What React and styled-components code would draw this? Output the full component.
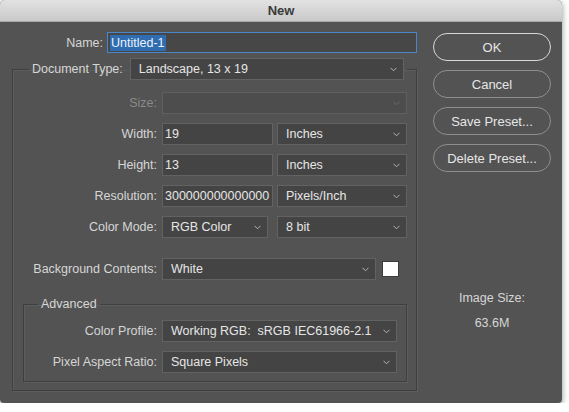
import React from 'react';
import styled, { createGlobalStyle } from 'styled-components';

const GlobalStyle = createGlobalStyle`
  html, body {
    margin: 0;
    padding: 0;
    background: #ffffff;
  }
  body {
    font-family: "Liberation Sans", Arial, Helvetica, sans-serif;
    font-size: 12.5px;
  }
`;

const Dialog = styled.div`
  width: 562px;
  background: #535353;
  border-radius: 5px 5px 4px 4px;
  box-shadow: 0 2px 6px rgba(0, 0, 0, 0.45);
  overflow: hidden;
`;

const TitleBar = styled.div`
  height: 22px;
  display: flex;
  align-items: center;
  justify-content: center;
  background: linear-gradient(#e2e2e2, #c9c9c9);
  border-bottom: 1px solid #a9a9a9;
  box-sizing: border-box;
  color: #3a3a3a;
  font-weight: 700;
  font-size: 13px;
`;

const Body = styled.div`
  display: flex;
  padding: 10px 0 12px 12px;
`;

const LeftCol = styled.div`
  width: 405px;
  display: flex;
  flex-direction: column;
`;

const RightCol = styled.div`
  width: 118px;
  margin-left: 16px;
  padding-top: 1px;
  display: flex;
  flex-direction: column;
  gap: 9px;
`;

const NameRow = styled.div`
  display: flex;
  align-items: center;
  height: 21px;
`;

const Label = styled.label`
  width: ${(p) => (p.$w ? `${p.$w}px` : 'auto')};
  flex: none;
  text-align: right;
  margin-right: ${(p) => (p.$gap != null ? p.$gap : 5)}px;
  color: ${(p) => (p.$disabled ? '#8a8a8a' : '#d6d6d6')};
  white-space: nowrap;
`;

const NameInput = styled.div`
  width: 310px;
  height: 21px;
  box-sizing: border-box;
  background: #474747;
  border: 1px solid #4b86c8;
  display: flex;
  align-items: center;
  padding-left: 2px;
`;

const Selected = styled.span`
  background: #2f6db0;
  color: #eaf2ff;
  padding: 1px 1px;
`;

const Group = styled.fieldset`
  margin: ${(p) => p.$margin || '0'};
  padding: ${(p) => p.$padding};
  border: 1px solid #3f3f3f;
  box-shadow: 1px 1px 0 #5d5d5d, inset 1px 1px 0 #5d5d5d;
  min-width: 0;
  display: flex;
  flex-direction: column;
  gap: 9px;
`;

const Legend = styled.legend`
  margin-left: ${(p) => p.$offset}px;
  padding: 0 3px;
  display: flex;
  align-items: center;
  color: #d6d6d6;
  line-height: 15px;
`;

const Row = styled.div`
  display: flex;
  align-items: center;
  height: 22px;
  margin-top: ${(p) => p.$top || 0}px;
`;

const Field = styled.div`
  width: ${(p) => p.$w}px;
  height: 22px;
  box-sizing: border-box;
  flex: none;
  margin-left: ${(p) => p.$ml || 0}px;
  background: ${(p) => (p.$disabled ? '#4d4d4d' : '#444444')};
  border: 1px solid ${(p) => (p.$disabled ? '#5f5f5f' : '#626262')};
  display: flex;
  align-items: center;
  padding-left: ${(p) => (p.$select ? 8 : 2)}px;
  padding-right: 6px;
  color: #e6e6e6;
  white-space: nowrap;
  overflow: hidden;
`;

const FieldText = styled.span`
  flex: 1;
  overflow: hidden;
`;

const Swatch = styled.div`
  width: 15px;
  height: 14px;
  margin-left: 6px;
  background: #ffffff;
  border: 1px solid #3c3c3c;
`;

const Button = styled.button`
  height: 28px;
  width: 118px;
  border-radius: 14px;
  background: transparent;
  border: ${(p) => (p.$primary ? '1.5px solid #d8d8d8' : '1px solid #8e8e8e')};
  color: #e6e6e6;
  font-family: inherit;
  font-size: 13px;
  padding: 0;
  cursor: pointer;
`;

const SizeInfo = styled.div`
  margin-top: 110px;
  display: flex;
  flex-direction: column;
  align-items: center;
  gap: 10px;
  color: #d6d6d6;
  line-height: 15px;
`;

function Chevron({ dim }) {
  return (
    <svg width="7" height="5" viewBox="0 0 7 5" style={{ flex: 'none' }}>
      <path d="M0.5 0.8 L3.5 3.8 L6.5 0.8" fill="none" stroke={dim ? '#6a6a6a' : '#b4b4b4'} strokeWidth="1" />
    </svg>
  );
}

function Select({ w, ml, children, disabled }) {
  return (
    <Field $w={w} $ml={ml} $select $disabled={disabled}>
      <FieldText>{children}</FieldText>
      <Chevron dim={disabled} />
    </Field>
  );
}

export default function App() {
  return (
    <>
      <GlobalStyle />
      <Dialog>
        <TitleBar>New</TitleBar>
        <Body>
          <LeftCol>
            <NameRow>
              <Label $w={91} $gap={4}>Name:</Label>
              <NameInput>
                <Selected>Untitled-1</Selected>
              </NameInput>
            </NameRow>

            <Group $margin="5px 0 0 0" $padding="12px 0 8px 0">
              <Legend $offset={16}>
                <Label as="span" $gap={7}>Document Type:</Label>
                <Select w={274}>Landscape, 13 x 19</Select>
              </Legend>
              <Row>
                <Label $w={144} $disabled>Size:</Label>
                <Select w={245} disabled></Select>
              </Row>
              <Row>
                <Label $w={144}>Width:</Label>
                <Field $w={111}>19</Field>
                <Select w={130} ml={4}>Inches</Select>
              </Row>
              <Row>
                <Label $w={144}>Height:</Label>
                <Field $w={111}>13</Field>
                <Select w={130} ml={4}>Inches</Select>
              </Row>
              <Row>
                <Label $w={144}>Resolution:</Label>
                <Field $w={111}>300000000000000</Field>
                <Select w={130} ml={4}>Pixels/Inch</Select>
              </Row>
              <Row>
                <Label $w={144}>Color Mode:</Label>
                <Select w={106}>RGB Color</Select>
                <Select w={130} ml={9}>8 bit</Select>
              </Row>
              <Row $top={11}>
                <Label $w={144}>Background Contents:</Label>
                <Select w={214}>White</Select>
                <Swatch />
              </Row>

              <Group $margin="8px 9px 0 10px" $padding="8px 0 8px 0">
                <Legend $offset={14}>Advanced</Legend>
                <Row>
                  <Label $w={133}>Color Profile:</Label>
                  <Select w={235}>Working RGB:&nbsp; sRGB IEC61966-2.1</Select>
                </Row>
                <Row>
                  <Label $w={133}>Pixel Aspect Ratio:</Label>
                  <Select w={235}>Square Pixels</Select>
                </Row>
              </Group>
            </Group>
          </LeftCol>

          <RightCol>
            <Button $primary>OK</Button>
            <Button>Cancel</Button>
            <Button>Save Preset...</Button>
            <Button>Delete Preset...</Button>
            <SizeInfo>
              <span>Image Size:</span>
              <span>63.6M</span>
            </SizeInfo>
          </RightCol>
        </Body>
      </Dialog>
    </>
  );
}
